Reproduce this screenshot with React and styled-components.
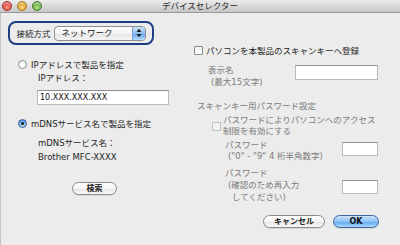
import React from 'react';
import styled, { createGlobalStyle, css } from 'styled-components';

const Global = createGlobalStyle`
  html, body {
    margin: 0;
    padding: 0;
    background: #ececec;
  }
  body {
    font-family: "DejaVu Sans", "Noto Sans CJK JP", sans-serif;
    font-size: 8.5px;
    color: #1e1e1e;
  }
  * { box-sizing: border-box; }
`;

const Window = styled.div`
  width: 400px;
  height: 245px;
  display: flex;
  flex-direction: column;
  background: #ececec;
  box-shadow: inset 1px 0 0 #c4c4c4;
  overflow: hidden;
`;

const TitleBar = styled.div`
  height: 13px;
  display: grid;
  grid-template-columns: 1fr auto 1fr;
  align-items: center;
  background: linear-gradient(#ececec, #c6c6c6);
  border-bottom: 1px solid #9a9a9a;
`;

const Lights = styled.div`
  display: flex;
  gap: 5px;
  padding-left: 2px;
`;

const Light = styled.span`
  width: 10px;
  height: 10px;
  border-radius: 50%;
  border: 1px solid ${({ $edge }) => $edge};
  background: radial-gradient(circle at 50% 70%, ${({ $glow }) => $glow} 0%, ${({ $color }) => $color} 60%),
    ${({ $color }) => $color};
  box-shadow: inset 0 2px 1px rgba(255, 255, 255, 0.45);
`;

const Title = styled.div`
  font-size: 8.5px;
  line-height: 12px;
  color: #262626;
`;

const Body = styled.div`
  flex: 1;
  display: grid;
  grid-template-columns: 190px 1fr;
`;

const Column = styled.div`
  display: flex;
  flex-direction: column;
  align-items: flex-start;
`;

const GroupBox = styled.div`
  margin: 8px 0 0 8px;
  width: 146px;
  height: 24px;
  border: 2.5px solid #1d3d84;
  border-radius: 8px;
  display: flex;
  align-items: center;
  gap: 3px;
  padding-left: 6.5px;
`;

const Popup = styled.div`
  width: 92px;
  height: 15px;
  display: flex;
  border: 1px solid #8d8d8d;
  border-radius: 4px;
  background: linear-gradient(#ffffff, #f3f3f3 50%, #e6e6e6 51%, #f4f4f4);
  overflow: hidden;
`;

const PopupText = styled.span`
  flex: 1;
  padding-left: 7px;
  line-height: 13px;
  color: #111;
`;

const PopupArrows = styled.span`
  width: 13px;
  display: flex;
  align-items: center;
  justify-content: center;
  border-left: 1px solid #7d9ccc;
  background: linear-gradient(#cfe3f8, #8cbdf0 50%, #5ea3ec 51%, #b9dcfb);
`;

const Row = styled.div`
  display: flex;
  align-items: center;
  height: 12px;
  gap: ${({ $gap }) => $gap ?? 4}px;
  margin-top: ${({ $mt }) => $mt}px;
  padding-left: ${({ $pl }) => $pl}px;
  color: ${({ $dim }) => ($dim ? '#7b7b7b' : '#1e1e1e')};
`;

const Radio = styled.span`
  width: 9px;
  height: 9px;
  border-radius: 50%;
  border: 1px solid ${({ $on }) => ($on ? '#3a5f93' : '#8a8a8a')};
  display: flex;
  align-items: center;
  justify-content: center;
  background: ${({ $on }) =>
    $on
      ? 'radial-gradient(circle at 50% 75%, #cfeaff, #6aaaf0 60%, #3f82d8)'
      : 'linear-gradient(#f4f4f4, #ffffff)'};
  &::after {
    content: '';
    display: ${({ $on }) => ($on ? 'block' : 'none')};
    width: 3px;
    height: 3px;
    border-radius: 50%;
    background: #111;
  }
`;

const Check = styled.span`
  width: 9px;
  height: 9px;
  flex: none;
  border: 1px solid ${({ $dim }) => ($dim ? '#bdbdbd' : '#8a8a8a')};
  border-radius: 1px;
  background: ${({ $dim }) => ($dim ? '#f2f2f2' : 'linear-gradient(#f0f0f0, #ffffff)')};
`;

const Label = styled.div`
  margin-top: ${({ $mt }) => $mt || 0}px;
  margin-left: ${({ $ml }) => $ml || 0}px;
  line-height: ${({ $lh }) => $lh || 12}px;
  color: ${({ $dim }) => ($dim ? '#7b7b7b' : '#1e1e1e')};
  white-space: nowrap;
`;

const Indent = styled.span`
  display: block;
  padding-left: ${({ $pl }) => $pl ?? 2}px;
`;

const Field = styled.div`
  margin-top: ${({ $mt }) => $mt || 0}px;
  margin-left: ${({ $ml }) => $ml || 0}px;
  width: ${({ $w }) => $w}px;
  height: ${({ $h }) => $h || 15}px;
  flex: none;
  background: #fff;
  border: 1px solid #b9b9b9;
  border-top-color: #8f8f8f;
  padding-left: 2px;
  font-size: 8px;
  line-height: 13px;
  color: #111;
`;

const PushButton = styled.button`
  height: 13px;
  width: ${({ $w }) => $w}px;
  margin-top: ${({ $mt }) => $mt || 0}px;
  margin-left: ${({ $ml }) => $ml || 0}px;
  padding: 0;
  border-radius: 7px;
  font-family: inherit;
  font-size: 8px;
  font-weight: bold;
  line-height: 11px;
  color: #222;
  border: 1px solid #8a8a8a;
  background: linear-gradient(#ffffff, #f4f4f4 50%, #e4e4e4 51%, #f9f9f9);
  box-shadow: 0 1px 0 rgba(0, 0, 0, 0.08);
  ${({ $primary }) =>
    $primary &&
    css`
      border-color: #41689f;
      background: linear-gradient(#cde4fb, #8ec2f3 50%, #5ca7ee 51%, #a8d7fb);
      color: #111;
    `}
`;

const SplitRow = styled.div`
  display: flex;
  align-items: flex-start;
  margin-top: ${({ $mt }) => $mt}px;
  padding-left: ${({ $pl }) => $pl}px;
  width: 100%;
  padding-right: 22px;
  justify-content: space-between;
`;

const CheckBlock = styled.div`
  display: flex;
  align-items: flex-start;
  gap: 2px;
  margin-top: ${({ $mt }) => $mt}px;
  padding-left: ${({ $pl }) => $pl}px;
  color: #7b7b7b;
  & > span:first-child {
    margin-top: 7px;
  }
`;

const ButtonBar = styled.div`
  align-self: stretch;
  display: flex;
  justify-content: flex-end;
  gap: 8px;
  margin-top: 12px;
  padding-right: 21px;
`;

const Arrows = () => (
  <svg width="6" height="10" viewBox="0 0 6 10">
    <path d="M3 0.8 L5.4 4 H0.6 Z" fill="#1a1a1a" />
    <path d="M3 9.2 L5.4 6 H0.6 Z" fill="#1a1a1a" />
  </svg>
);

export default function App() {
  return (
    <>
      <Global />
      <Window>
        <TitleBar>
          <Lights>
            <Light $color="#d8423a" $glow="#ff9b85" $edge="#a3302a" />
            <Light $color="#dd9a22" $glow="#ffe08a" $edge="#a87418" />
            <Light $color="#5fa63a" $glow="#b9ec8c" $edge="#447c2a" />
          </Lights>
          <Title>デバイスセレクター</Title>
          <span />
        </TitleBar>
        <Body>
          <Column>
            <GroupBox>
              <span>接続方式</span>
              <Popup>
                <PopupText>ネットワーク</PopupText>
                <PopupArrows>
                  <Arrows />
                </PopupArrows>
              </Popup>
            </GroupBox>
            <Row $mt={13} $pl={18}>
              <Radio />
              <span>IPアドレスで製品を指定</span>
            </Row>
            <Label $mt={2} $ml={38}>IPアドレス：</Label>
            <Field $mt={6} $ml={37} $w={132}>10.XXX.XXX.XXX</Field>
            <Row $mt={12} $pl={18}>
              <Radio $on />
              <span>mDNSサービス名で製品を指定</span>
            </Row>
            <Label $mt={8} $ml={38}>mDNSサービス名：</Label>
            <Label $mt={2} $ml={38}>Brother MFC-XXXX</Label>
            <PushButton $mt={19} $ml={72} $w={45}>検索</PushButton>
          </Column>
          <Column>
            <Row $mt={31} $pl={4} $gap={3}>
              <Check />
              <span>パソコンを本製品のスキャンキーへ登録</span>
            </Row>
            <SplitRow $mt={8} $pl={18}>
              <Label $dim>
                表示名
                <Indent $pl={3}>(最大15文字)</Indent>
              </Label>
              <Field $mt={1} $w={83} />
            </SplitRow>
            <Label $mt={12} $ml={7} $dim>スキャンキー用パスワード設定</Label>
            <CheckBlock $mt={3} $pl={22}>
              <Check $dim />
              <Label $lh={11} $dim>
                パスワードによりパソコンへのアクセス
                <Indent $pl={0}>制限を有効にする</Indent>
              </Label>
            </CheckBlock>
            <SplitRow $mt={3} $pl={35}>
              <Label $lh={11} $dim>
                パスワード
                <Indent $pl={3}>("0" - "9"  4 桁半角数字)</Indent>
              </Label>
              <Field $mt={2} $w={36} $h={14} />
            </SplitRow>
            <SplitRow $mt={5} $pl={35}>
              <Label $dim>
                パスワード
                <Indent $pl={3}>(確認のため再入力</Indent>
                <Indent $pl={7}>してください)</Indent>
              </Label>
              <Field $mt={13} $w={36} $h={14} />
            </SplitRow>
            <ButtonBar>
              <PushButton $w={62}>キャンセル</PushButton>
              <PushButton $w={46} $primary>OK</PushButton>
            </ButtonBar>
          </Column>
        </Body>
      </Window>
    </>
  );
}
